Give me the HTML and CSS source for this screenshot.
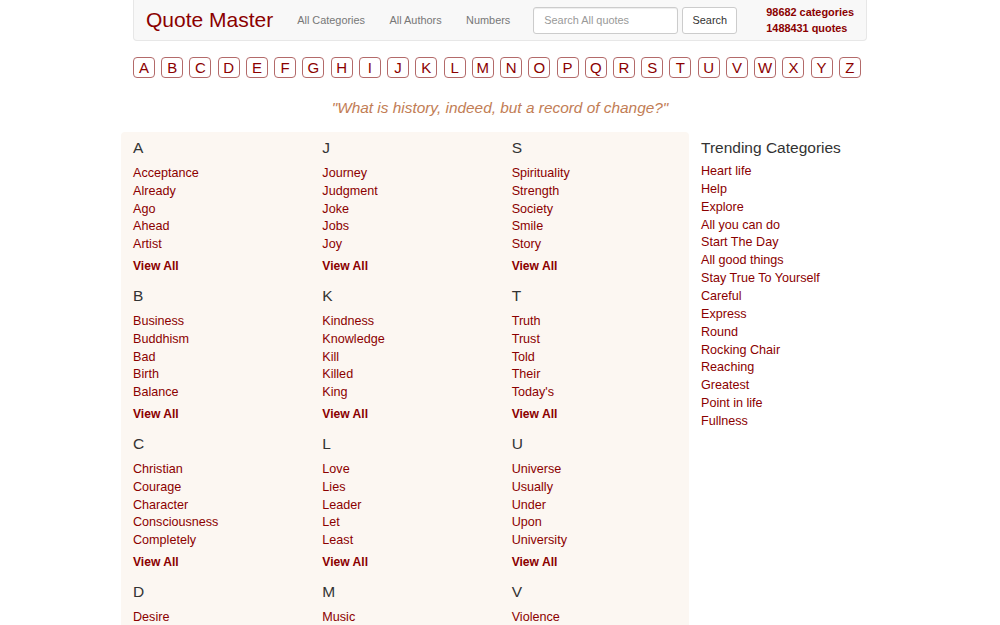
FILE: index.html
```html
<!DOCTYPE html>
<html>
<head>
<meta charset="utf-8">
<link rel="stylesheet" href="styles.css">
</head>
<body>
<nav class="navbar">
  <a class="brand" href="#">Quote Master</a>
  <a class="nav-link" href="#">All Categories</a>
  <a class="nav-link" href="#">All Authors</a>
  <a class="nav-link nav-last" href="#">Numbers</a>
  <form class="search">
    <input class="search-input" type="text" placeholder="Search All quotes">
    <button class="search-btn" type="button">Search</button>
  </form>
  <div class="stats">
    <div>98682 categories</div>
    <div>1488431 quotes</div>
  </div>
</nav>

<div class="letters">
  <a href="#">A</a><a href="#">B</a><a href="#">C</a><a href="#">D</a><a href="#">E</a><a href="#">F</a><a href="#">G</a><a href="#">H</a><a href="#">I</a><a href="#">J</a><a href="#">K</a><a href="#">L</a><a href="#">M</a><a href="#">N</a><a href="#">O</a><a href="#">P</a><a href="#">Q</a><a href="#">R</a><a href="#">S</a><a href="#">T</a><a href="#">U</a><a href="#">V</a><a href="#">W</a><a href="#">X</a><a href="#">Y</a><a href="#">Z</a>
</div>

<p class="quote">"What is history, indeed, but a record of change?"</p>

<div class="layout">
  <main class="panel">
    <section class="group"><h3>A</h3><ul><li><a href="#">Acceptance</a></li><li><a href="#">Already</a></li><li><a href="#">Ago</a></li><li><a href="#">Ahead</a></li><li><a href="#">Artist</a></li></ul><a class="view-all" href="#">View All</a></section>
    <section class="group"><h3>J</h3><ul><li><a href="#">Journey</a></li><li><a href="#">Judgment</a></li><li><a href="#">Joke</a></li><li><a href="#">Jobs</a></li><li><a href="#">Joy</a></li></ul><a class="view-all" href="#">View All</a></section>
    <section class="group"><h3>S</h3><ul><li><a href="#">Spirituality</a></li><li><a href="#">Strength</a></li><li><a href="#">Society</a></li><li><a href="#">Smile</a></li><li><a href="#">Story</a></li></ul><a class="view-all" href="#">View All</a></section>

    <section class="group"><h3>B</h3><ul><li><a href="#">Business</a></li><li><a href="#">Buddhism</a></li><li><a href="#">Bad</a></li><li><a href="#">Birth</a></li><li><a href="#">Balance</a></li></ul><a class="view-all" href="#">View All</a></section>
    <section class="group"><h3>K</h3><ul><li><a href="#">Kindness</a></li><li><a href="#">Knowledge</a></li><li><a href="#">Kill</a></li><li><a href="#">Killed</a></li><li><a href="#">King</a></li></ul><a class="view-all" href="#">View All</a></section>
    <section class="group"><h3>T</h3><ul><li><a href="#">Truth</a></li><li><a href="#">Trust</a></li><li><a href="#">Told</a></li><li><a href="#">Their</a></li><li><a href="#">Today's</a></li></ul><a class="view-all" href="#">View All</a></section>

    <section class="group"><h3>C</h3><ul><li><a href="#">Christian</a></li><li><a href="#">Courage</a></li><li><a href="#">Character</a></li><li><a href="#">Consciousness</a></li><li><a href="#">Completely</a></li></ul><a class="view-all" href="#">View All</a></section>
    <section class="group"><h3>L</h3><ul><li><a href="#">Love</a></li><li><a href="#">Lies</a></li><li><a href="#">Leader</a></li><li><a href="#">Let</a></li><li><a href="#">Least</a></li></ul><a class="view-all" href="#">View All</a></section>
    <section class="group"><h3>U</h3><ul><li><a href="#">Universe</a></li><li><a href="#">Usually</a></li><li><a href="#">Under</a></li><li><a href="#">Upon</a></li><li><a href="#">University</a></li></ul><a class="view-all" href="#">View All</a></section>

    <section class="group"><h3>D</h3><ul><li><a href="#">Desire</a></li><li><a href="#">Death</a></li><li><a href="#">Dreams</a></li><li><a href="#">Day</a></li><li><a href="#">Done</a></li></ul><a class="view-all" href="#">View All</a></section>
    <section class="group"><h3>M</h3><ul><li><a href="#">Music</a></li><li><a href="#">Money</a></li><li><a href="#">Mind</a></li><li><a href="#">Moment</a></li><li><a href="#">Mother</a></li></ul><a class="view-all" href="#">View All</a></section>
    <section class="group"><h3>V</h3><ul><li><a href="#">Violence</a></li><li><a href="#">Values</a></li><li><a href="#">Victory</a></li><li><a href="#">Vision</a></li><li><a href="#">Voice</a></li></ul><a class="view-all" href="#">View All</a></section>
  </main>

  <aside class="sidebar">
    <h3>Trending Categories</h3>
    <ul>
      <li><a href="#">Heart life</a></li>
      <li><a href="#">Help</a></li>
      <li><a href="#">Explore</a></li>
      <li><a href="#">All you can do</a></li>
      <li><a href="#">Start The Day</a></li>
      <li><a href="#">All good things</a></li>
      <li><a href="#">Stay True To Yourself</a></li>
      <li><a href="#">Careful</a></li>
      <li><a href="#">Express</a></li>
      <li><a href="#">Round</a></li>
      <li><a href="#">Rocking Chair</a></li>
      <li><a href="#">Reaching</a></li>
      <li><a href="#">Greatest</a></li>
      <li><a href="#">Point in life</a></li>
      <li><a href="#">Fullness</a></li>
    </ul>
  </aside>
</div>
</body>
</html>
```

FILE: styles.css
```css
html, body {
  margin: 0;
  padding: 0;
  background: #fff;
  font-family: "Liberation Sans", Arial, sans-serif;
  color: #333;
}

a { text-decoration: none; }

.navbar {
  box-sizing: border-box;
  width: 734px;
  height: 41px;
  margin: 0 auto;
  background: #f8f8f8;
  border: 1px solid #e7e7e7;
  border-top: none;
  border-radius: 0 0 4px 4px;
  display: flex;
  align-items: center;
  padding: 0 2px 0 12px;
  white-space: nowrap;
}

.navbar > * { flex: none; }

.brand {
  font-size: 21px;
  color: #8b0000;
  margin-right: 24px;
  line-height: 40px;
}

.nav-link {
  font-size: 10.9px;
  color: #777;
  margin-right: 24.5px;
}

.nav-link.nav-last { margin-right: 23px; }

.search {
  display: flex;
  align-items: center;
  margin: 0;
}

.search-input {
  box-sizing: border-box;
  width: 145px;
  height: 27px;
  border: 1px solid #ccc;
  border-radius: 3px;
  padding: 0 10px;
  font-family: "Liberation Sans", Arial, sans-serif;
  font-size: 10.9px;
  color: #555;
  box-shadow: inset 0 1px 1px rgba(0,0,0,0.075);
}

.search-input::placeholder { color: #999; }

.search-btn {
  box-sizing: border-box;
  width: 55px;
  height: 27px;
  margin-left: 4px;
  background: #fff;
  border: 1px solid #ccc;
  border-radius: 3px;
  font-family: "Liberation Sans", Arial, sans-serif;
  font-size: 10.9px;
  color: #333;
}

.stats {
  margin-left: 29px;
  font-size: 10.9px;
  font-weight: bold;
  color: #8b0000;
  line-height: 16px;
}

.letters {
  width: 734px;
  margin: 16px auto 0;
  display: flex;
  gap: 6.24px;
}

.letters a {
  box-sizing: border-box;
  width: 22px;
  height: 21px;
  border: 1px solid #b36a6a;
  border-radius: 4px;
  color: #8b0000;
  font-size: 15px;
  line-height: 19px;
  text-align: center;
}

.quote {
  margin: 20px 0 0;
  text-align: center;
  font-style: italic;
  font-size: 15.4px;
  line-height: 20px;
  color: #c27d55;
}

.layout {
  width: 758px;
  margin: 14px auto 0;
  display: flex;
  gap: 12px;
}

.panel {
  width: 568px;
  flex: none;
  background: #fcf7f2;
  border-radius: 4px;
  display: grid;
  grid-template-columns: repeat(3, 1fr);
  padding: 0 0 20px;
}

.group {
  padding: 6px 0 5px 12px;
  height: 148px;
  box-sizing: border-box;
}

.group h3, .sidebar h3 {
  margin: 0;
  font-size: 15.5px;
  font-weight: normal;
  line-height: 20px;
  color: #333;
}

.group ul, .sidebar ul {
  list-style: none;
  margin: 7px 0 0;
  padding: 0;
}

.group li, .sidebar li {
  font-size: 12.6px;
  line-height: 17.8px;
}

.group li a, .sidebar li a {
  color: #8b0000;
}

.view-all {
  display: block;
  margin-top: 3px;
  font-size: 12.1px;
  font-weight: bold;
  line-height: 18px;
  color: #8b0000;
}

.sidebar {
  flex: 1;
  padding-top: 6px;
}

.sidebar ul {
  margin-top: 5px;
}

.sidebar li { line-height: 17.86px; }
```
